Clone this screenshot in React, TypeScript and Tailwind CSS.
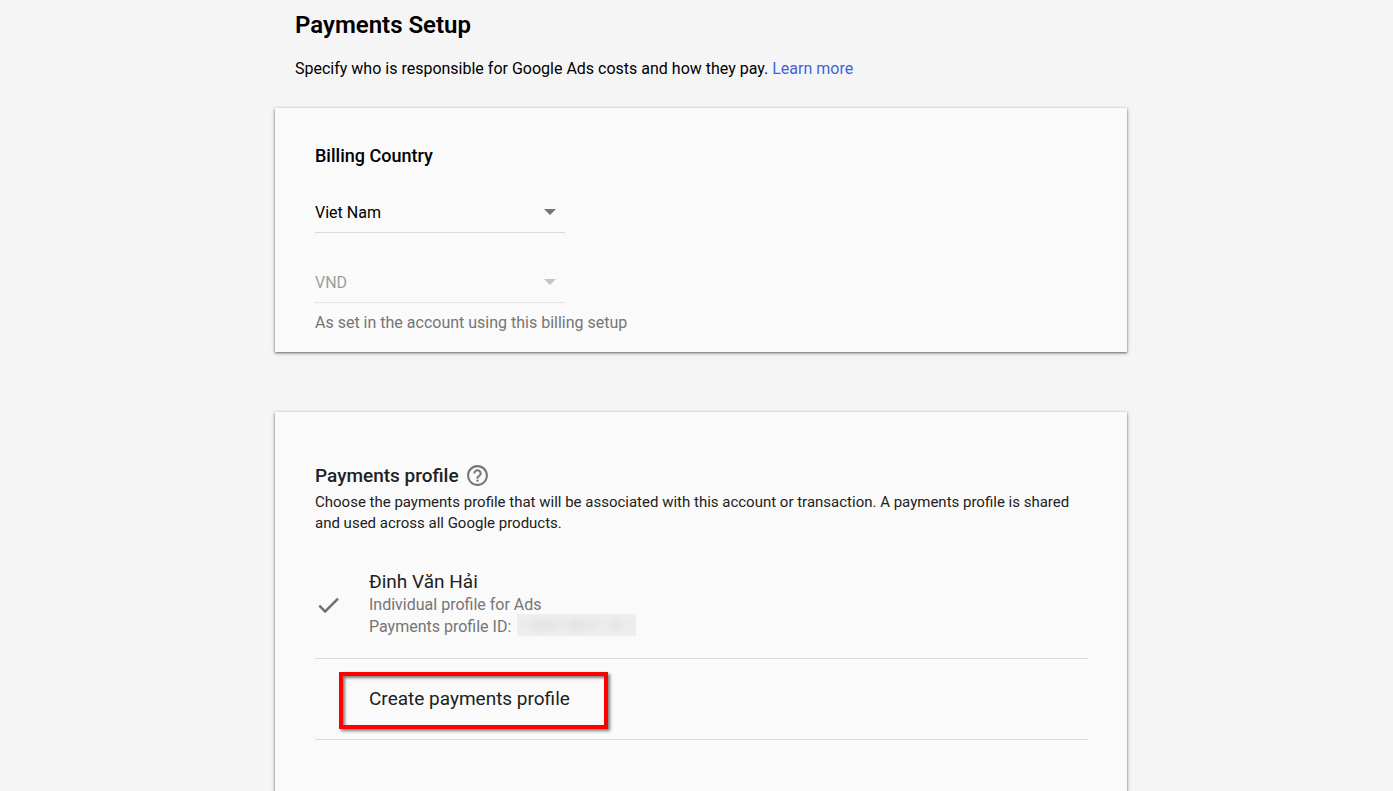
import { useState } from 'react'

const countries = ['Viet Nam', 'Thailand', 'Singapore', 'Japan']

// soft tones of the hidden profile id, left to right
const maskTones = [
    'bg-[#ebebeb]',
    'bg-[#e4e4e4]',
    'bg-[#e5e5e5]',
    'bg-[#e9e9e9]',
    'bg-[#e3e3e3]',
    'bg-[#e7e7e7]',
    'bg-[#ebebeb]',
    'bg-[#e5e5e5]',
    'bg-[#ececec]',
]

function DropdownArrow({ className }: { className: string }) {
    return (
        <svg viewBox="0 0 12 6" className={`pointer-events-none col-start-1 row-start-1 mr-[9px] mb-px h-[6px] w-[12px] self-center justify-self-end ${className}`} aria-hidden="true">
            <path d="M0 0h12L6 6z" fill="currentColor" />
        </svg>
    )
}

function HelpIcon() {
    return (
        <svg viewBox="0 0 24 24" className="size-[25px]" fill="currentColor" aria-hidden="true">
            <path d="M11 18h2v-2h-2v2zm1-16C6.48 2 2 6.48 2 12s4.48 10 10 10 10-4.48 10-10S17.52 2 12 2zm0 18c-4.41 0-8-3.59-8-8s3.59-8 8-8 8 3.59 8 8-3.59 8-8 8zm0-14c-2.21 0-4 1.79-4 4h2c0-1.1.9-2 2-2s2 .9 2 2c0 2-3 1.75-3 5h2c0-2.25 3-2.5 3-5 0-2.21-1.79-4-4-4z" />
        </svg>
    )
}

function CheckIcon() {
    return (
        <svg viewBox="0 0 24 24" className="size-[27px] shrink-0 text-[#6f6f6f]" fill="currentColor" aria-hidden="true">
            <path d="M9 16.6L4.6 12.2l-1.5 1.5L9 19.7 21.2 7.5l-1.5-1.5z" />
        </svg>
    )
}

function BillingCountry() {
    const [country, setCountry] = useState('Viet Nam')

    return (
        <section className="bg-[#fafafa] px-10 pt-9 pb-4 shadow-[0_1px_4px_rgba(0,0,0,0.3),0_1px_2px_rgba(0,0,0,0.4)]">
            <h2 className="text-lg leading-6 font-medium">Billing Country</h2>
            <div className="mt-6 grid h-[41px] w-[250px]">
                <select
                    aria-label="Billing country"
                    value={country}
                    onChange={(e) => setCountry(e.target.value)}
                    className="col-start-1 row-start-1 appearance-none border-b border-[#dadada] bg-transparent pt-0.5 text-base outline-none"
                >
                    {countries.map((name) => (
                        <option key={name}>{name}</option>
                    ))}
                </select>
                <DropdownArrow className="text-[#757575]" />
            </div>
            <div className="mt-[29px] grid h-[41px] w-[250px]">
                <select
                    aria-label="Currency"
                    aria-describedby="currency-hint"
                    disabled
                    className="col-start-1 row-start-1 appearance-none border-b border-dotted border-[#cfcfcf] bg-transparent pt-0.5 text-base text-[#9e9e9e] opacity-100"
                >
                    <option>VND</option>
                </select>
                <DropdownArrow className="text-[#c4c4c4]" />
            </div>
            <p id="currency-hint" className="mt-2 pb-px text-base leading-6 text-[#757575]">
                As set in the account using this billing setup
            </p>
        </section>
    )
}

function PaymentsProfile() {
    return (
        <section className="mt-15 min-h-[440px] bg-[#fafafa] pt-13 pr-[39px] pb-10 pl-10 text-[#212121] shadow-[0_1px_4px_rgba(0,0,0,0.3),0_1px_2px_rgba(0,0,0,0.4)]">
            <div className="flex h-6 items-center gap-1.5">
                <h2 className="text-[19px] leading-6 font-medium">Payments profile</h2>
                <button type="button" aria-label="About payments profiles" className="pb-px text-[#757575]">
                    <HelpIcon />
                </button>
            </div>
            <p className="mt-1 text-[15px] leading-[21px]">
                Choose the payments profile that will be associated with this account or transaction. A payments profile is shared and used across all Google products.
            </p>

            <ul className="mt-9">
                <li className="border-b border-[#dadada] pb-5">
                    <button type="button" className="flex items-center gap-[27px] text-left">
                        <CheckIcon />
                        <span className="flex flex-col">
                            <span className="text-[19px] leading-6">Đinh Văn Hải</span>
                            <span className="text-base leading-[22px] text-[#757575]">Individual profile for Ads</span>
                            <span className="flex items-center gap-1.5 text-base leading-[22px] text-[#757575]">
                                Payments profile ID:
                                <span className="-mt-1 flex h-[22px] w-[119px] items-center overflow-hidden bg-[#efefef]">
                                    <span className="flex h-3 w-full blur-[3px]">
                                        {maskTones.map((tone, i) => (
                                            <span key={i} className={`flex-1 ${tone}`} />
                                        ))}
                                    </span>
                                </span>
                            </span>
                        </span>
                    </button>
                </li>
                <li className="border-b border-[#dadada] pt-[13px] pb-[10px] pl-6">
                    <button
                        type="button"
                        className="flex h-[57px] w-[269px] items-center border-4 border-[#ff0000] pb-0.5 pl-[26px] text-[19px] shadow-[2px_2px_3px_rgba(0,0,0,0.5),inset_2px_2px_3px_rgba(0,0,0,0.5)]"
                    >
                        Create payments profile
                    </button>
                </li>
            </ul>
        </section>
    )
}

export default function App() {
    return (
        <div className="h-screen overflow-hidden bg-[#f5f5f5] pl-[9px] font-[Roboto,sans-serif] text-black">
            <main className="mx-auto max-w-[852px]">
                <header className="px-5 pt-[9px] pb-[27px]">
                    <h1 className="text-2xl leading-8 font-semibold">Payments Setup</h1>
                    <p className="mt-4 text-base leading-6">
                        Specify who is responsible for Google Ads costs and how they pay.{' '}
                        <a href="#learn-more" className="text-[#3f65d8]">Learn more</a>
                    </p>
                </header>
                <BillingCountry />
                <PaymentsProfile />
            </main>
        </div>
    )
}
